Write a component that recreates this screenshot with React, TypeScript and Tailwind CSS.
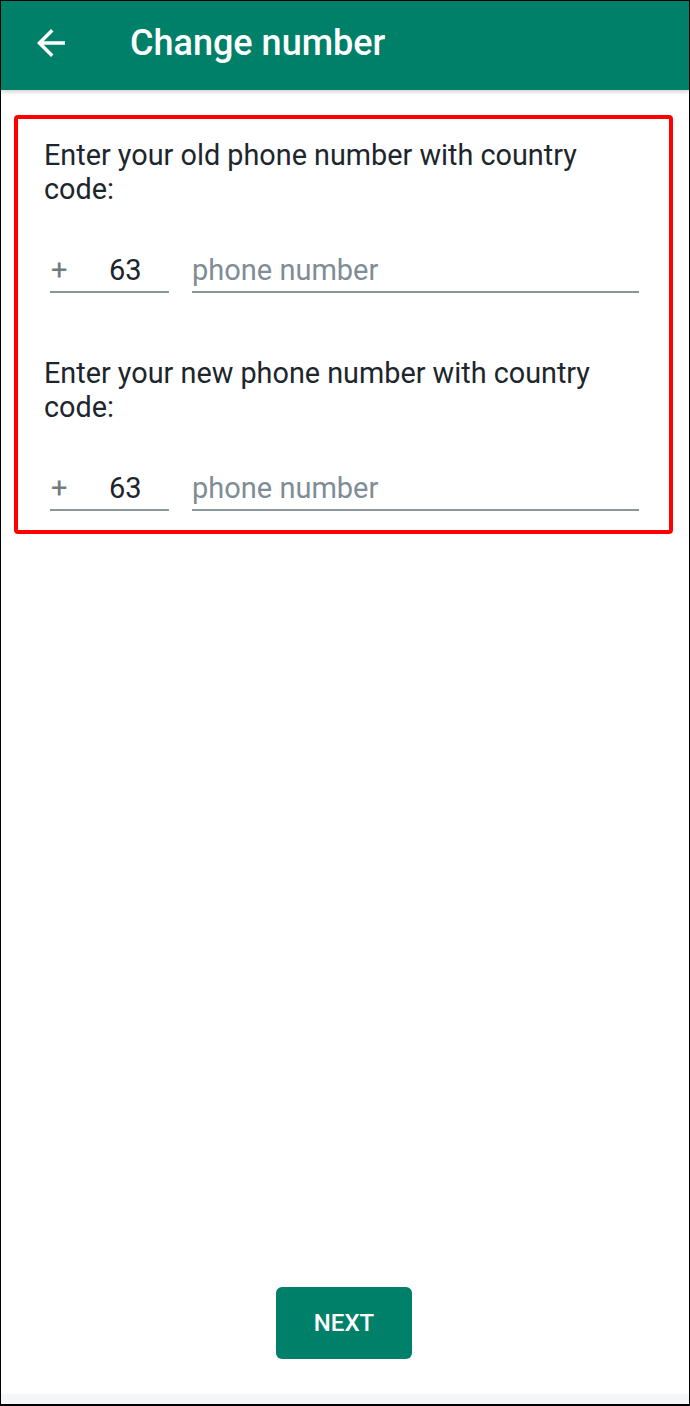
import React from 'react';

function PhoneRow() {
  return (
    <div className="flex items-end h-[47px] ml-[6px] text-[29px]">
      <div className="flex items-center w-[119px] h-full pt-[4px] border-b-2 border-[#8a959c]">
        <span className="w-[59px] pl-[1px] text-[#6f7b82]">+</span>
        <span className="text-[#1c262c]">63</span>
      </div>
      <div className="flex items-center flex-1 ml-[23px] h-full pt-[4px] border-b-2 border-[#8a959c] text-[#7f8d96]">
        phone number
      </div>
    </div>
  );
}

export default function App() {
  return (
    <div className="w-[690px] h-[1406px] border border-black border-b-2 flex flex-col bg-white overflow-hidden" style={{ fontFamily: 'Roboto, "Noto Sans", sans-serif' }}>
      <header className="h-[89px] shrink-0 bg-[#008069] flex items-center pb-[6px] shadow-[0_2px_4px_rgba(0,0,0,0.18)] z-10">
        <svg className="ml-[29px] w-[42px] h-[42px]" viewBox="0 0 24 24" fill="white">
          <path d="M20 11H7.83l5.59-5.59L12 4l-8 8 8 8 1.41-1.41L7.83 13H20v-2z" />
        </svg>
        <h1 className="ml-[58px] text-[36px] font-medium text-white leading-none">Change number</h1>
      </header>

      <main className="flex-1 flex flex-col">
        <div className="mt-[25px] ml-[13px] w-[659px] border-4 border-[#ff0000] rounded-[4px] pl-[26px] pr-[30px] pt-[19px] pb-[19px]">
          <p className="text-[28.8px] leading-[34px] text-[#1c262c]">Enter your old phone number with country code:</p>
          <div className="mt-[40px]">
            <PhoneRow />
          </div>
          <p className="mt-[63px] text-[28.8px] leading-[34px] text-[#1c262c]">Enter your new phone number with country code:</p>
          <div className="mt-[40px]">
            <PhoneRow />
          </div>
        </div>

        <div className="flex-1" />

        <div className="flex justify-center pb-[35px]">
          <button className="w-[136px] h-[72px] -ml-[2px] rounded-[6px] bg-[#008069] text-white text-[24px] font-medium">NEXT</button>
        </div>
      </main>

      <div className="h-[10px] shrink-0 bg-[#f5f6f8]" />
    </div>
  );
}
